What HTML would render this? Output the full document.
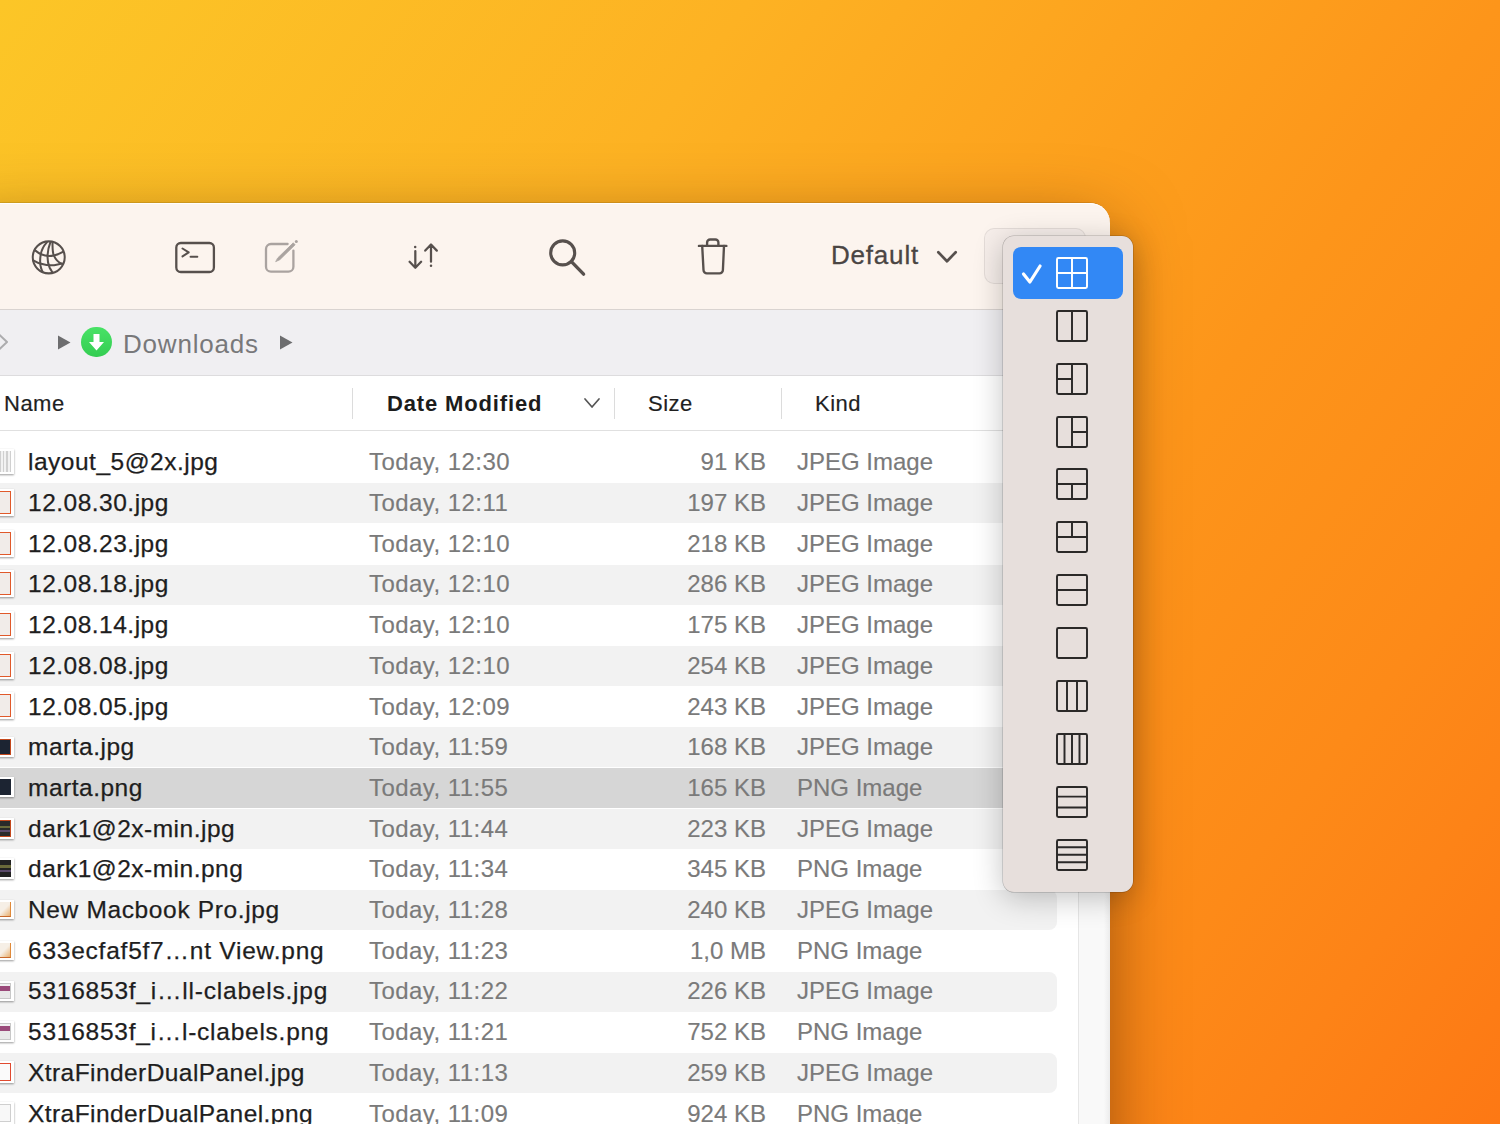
<!DOCTYPE html>
<html><head><meta charset="utf-8">
<style>
html,body{margin:0;padding:0;}
body{width:1500px;height:1124px;overflow:hidden;position:relative;
 background:linear-gradient(127deg,#fcc627 0%,#fdb223 32%,#fda01d 52%,#fd951a 64%,#fd8a18 81%,#fd8317 89%,#fd7814 100%);
 font-family:"Liberation Sans",sans-serif;}
.win{position:absolute;left:-40px;top:203px;width:1149px;height:1000px;background:#fff;
 border-top-right-radius:20px;overflow:hidden;box-shadow:0 0 0 1px rgba(0,0,0,0.10),0 24px 70px rgba(60,20,0,0.5);}
.abs{position:absolute;}
.toolbar{position:absolute;left:0;top:203px;width:1110px;height:106px;background:#fcf4ee;border-top-right-radius:20px;box-shadow:inset 0 1px 0 rgba(255,255,255,0.9);}
.tbline{position:absolute;left:0;top:309px;width:1110px;height:1px;background:#d9d3d0;}
.pathbar{position:absolute;left:0;top:310px;width:1110px;height:65px;background:#f0eff2;}
.pbline{position:absolute;left:0;top:375px;width:1110px;height:1px;background:#dddcde;}
.header{position:absolute;left:0;top:376px;width:1110px;height:54px;background:#fff;}
.hline{position:absolute;left:0;top:430px;width:1110px;height:1px;background:#e0e0e0;}
.sep{position:absolute;top:388px;width:1px;height:31px;background:#dcdcdc;}
.h{position:absolute;top:376.8px;height:54px;line-height:54px;font-size:22px;color:#1f1f1f;white-space:nowrap;letter-spacing:0.5px;-webkit-text-stroke:0.2px #1f1f1f;}
.row{position:absolute;left:-20px;width:1077px;height:40px;border-radius:8px;}
.row.alt{background:#f2f2f2;}
.row.sel{background:#d6d6d6;}
.t{position:absolute;height:40.7px;line-height:40.7px;font-size:24px;white-space:nowrap;}
.name{left:28px;color:#1e1e1e;letter-spacing:0.5px;font-size:24.5px;-webkit-text-stroke:0.25px #1e1e1e;}
.date{left:369px;color:#7a7a7a;letter-spacing:0.45px;-webkit-text-stroke:0.15px #7a7a7a;}
.size{right:734px;color:#7a7a7a;text-align:right;-webkit-text-stroke:0.15px #7a7a7a;}
.kind{left:797px;color:#7a7a7a;-webkit-text-stroke:0.15px #7a7a7a;}
.fi{position:absolute;left:-6px;width:19.5px;height:24.5px;background:#fff;box-shadow:0 0.5px 2px rgba(0,0,0,0.4);}
.fi::after{content:"";position:absolute;left:2px;top:2px;right:2.5px;bottom:2px;}
.fi.grid::after{background:repeating-linear-gradient(90deg,#d0d0d0 0 1.5px,#f2f2f2 1.5px 3.5px);}
.fi.orange::after{border:1.6px solid #e0592a;background:#f1ece9;}
.fi.darko::after{border:1.6px solid #c4481c;background:#1c2432;}
.fi.dark::after{background:#1c2432;}
.fi.darko2::after{border:1.6px solid #c4481c;background:linear-gradient(180deg,#2a2a2a 0 30%,#6a6a3a 30% 45%,#2a2a2a 45% 60%,#5a4a6a 60% 70%,#2a2a2a 70%);}
.fi.dark2::after{background:linear-gradient(180deg,#222 0 30%,#6a6a3a 30% 45%,#222 45% 60%,#5a4a6a 60% 70%,#222 70%);}
.fi.mac::after{border-right:1.6px solid #e08a3a;border-bottom:1.6px solid #c8682a;background:linear-gradient(135deg,#f6efe6 0 55%,#e8b070 100%);}
.fi.purple::after{background:linear-gradient(180deg,#f0f0f0 0 15%,#9a4a7a 15% 50%,#e8e8e8 50%);border:1px solid #c8c8c8;}
.fi.redw::after{border:1.6px solid #e04a30;background:#fafafa;}
.fi.white::after{border:1px solid #cfcfcf;background:#f8f8f8;}
.strip{position:absolute;left:1078px;top:431px;width:31px;height:700px;background:linear-gradient(90deg,#f9f9f9 0,#f9f9f9 80%,#ececec 100%);border-left:1px solid #e6e6e6;}
.popup{position:absolute;left:1003px;top:236px;width:130px;height:656px;background:#e7dfdc;border-radius:11px;
 box-shadow:0 0 0 0.5px rgba(0,0,0,0.25),0 6px 30px rgba(0,0,0,0.24);}
.psel{position:absolute;left:1013px;top:246.5px;width:110px;height:52.5px;background:#3288f5;border-radius:8px;}
.lay{position:absolute;left:1056px;}
.btn{position:absolute;left:985px;top:228.5px;width:100px;height:54.5px;border-radius:9px;background:#f6eeea;box-shadow:0 0 0 1px #e4dcd8;}
svg{overflow:visible;}
</style></head>
<body>
<div class="win"></div>
<div class="toolbar"></div>
<div class="tbline"></div>
<div class="pathbar"></div>
<div class="pbline"></div>
<div class="header"></div>
<div class="hline"></div>

<!-- toolbar icons -->
<svg class="abs" style="left:28px;top:236px" width="42" height="42" viewBox="0 0 1124 1124" fill="none" stroke="#57504d" stroke-width="54" stroke-linecap="round">
 <circle cx="555" cy="572" r="428"/>
 <path d="M505,170 C420,260 360,380 340,500 C320,620 320,760 350,860 C365,910 380,940 395,965"/>
 <path d="M600,165 C560,270 530,380 525,500 C515,640 540,760 580,850 C610,910 640,950 650,965"/>
 <path d="M655,175 C660,300 650,420 690,520 C740,630 800,700 890,740"/>
 <path d="M190,385 C260,440 300,470 350,490 C450,530 570,545 690,520 C780,500 860,470 935,425"/>
 <path d="M140,650 C220,700 300,730 380,750 C480,780 600,790 700,780 C790,770 860,750 915,735"/>
</svg>
<svg class="abs" style="left:174px;top:241px" width="42" height="33" viewBox="0 0 42 33" fill="none" stroke="#57504d" stroke-width="2.3" stroke-linecap="round" stroke-linejoin="round">
 <rect x="2.3" y="2" width="37.6" height="29" rx="4.5"/>
 <path d="M8.5 7.5L14.7 11.4L8.5 15.4" stroke-width="2"/>
 <path d="M16.6 15.8H23.3" stroke-width="2.1"/>
</svg>
<svg class="abs" style="left:263px;top:239px" width="38" height="36" viewBox="0 0 38 36" fill="none" stroke="#aaa3a0" stroke-width="2.3" stroke-linecap="round" stroke-linejoin="round">
 <path d="M24.6 5H8A5 5 0 0 0 3 10V27.7A5 5 0 0 0 8 32.7H25.4A5 5 0 0 0 30.4 27.7V11.6"/>
 <path d="M13 22.5L16.81 20.68L32.14 5.77L30.26 3.83L14.93 18.74Z" fill="#aaa3a0" stroke-width="0.8"/>
 <circle cx="33.3" cy="2.4" r="1.5" fill="#aaa3a0" stroke="none"/>
</svg>
<svg class="abs" style="left:406px;top:241px" width="34" height="30" viewBox="0 0 34 30" fill="none" stroke="#57504d" stroke-width="2.25" stroke-linecap="round" stroke-linejoin="round">
 <path d="M9.32 10V26.6M3.6 20.8L9.32 26.7L15.1 20.8"/>
 <circle cx="9.2" cy="5.9" r="1.25" fill="#57504d" stroke="none"/>
 <path d="M25 20.7V3.6M19.25 9.6L25 3.5L30.8 9.6"/>
 <circle cx="25" cy="24.7" r="1.25" fill="#57504d" stroke="none"/>
</svg>
<svg class="abs" style="left:546px;top:236px" width="42" height="42" viewBox="0 0 42 42" fill="none" stroke="#57504d" stroke-width="3.1" stroke-linecap="round">
 <circle cx="16.7" cy="16.9" r="12"/>
 <path d="M25.4 25.6L37.6 38.1" stroke-width="3.4"/>
</svg>
<svg class="abs" style="left:695px;top:236px" width="36" height="40" viewBox="0 0 36 40" fill="none" stroke="#57504d" stroke-width="2.35" stroke-linecap="round" stroke-linejoin="round">
 <path d="M3.9 9.9H31.4"/>
 <path d="M12.1 9.9V6.5A3 3 0 0 1 15.1 3.5H20.4A3 3 0 0 1 23.4 6.5V9.9"/>
 <path d="M7.2 9.9L8.5 34.0A3.4 3.4 0 0 0 11.9 37.4H24.5A3.4 3.4 0 0 0 27.9 34.0L29 9.9"/>
</svg>
<div class="abs" style="left:831px;top:236px;height:38px;line-height:38px;font-size:26px;color:#4a4543;letter-spacing:0.8px;-webkit-text-stroke:0.3px #4a4543;">Default</div>
<svg class="abs" style="left:936px;top:248px" width="24" height="16" viewBox="0 0 24 16" fill="none" stroke="#57504d" stroke-width="2.7" stroke-linecap="round" stroke-linejoin="round">
 <path d="M2.3 4.2L11 13.3L19.7 4.2"/>
</svg>
<div class="btn"></div>

<!-- path bar -->
<svg class="abs" style="left:-6px;top:333px" width="16" height="18" viewBox="0 0 16 18" fill="none" stroke="#acacae" stroke-width="2" stroke-linejoin="round"><path d="M5 1.5L13 9L5 16.5"/></svg>
<svg class="abs" style="left:57px;top:335px" width="14" height="15" viewBox="0 0 14 15"><path d="M1 0.5L13.5 7.5L1 14.5Z" fill="#6d6d6f"/></svg>
<div class="abs" style="left:81.3px;top:326.8px;width:30.4px;height:30.4px;border-radius:50%;background:linear-gradient(180deg,#48e266,#34cd52);"></div>
<svg class="abs" style="left:81px;top:326.5px" width="31" height="31" viewBox="0 0 31 31"><path d="M12.5 7H18.5V15H23L15.5 23.5L8 15H12.5Z" fill="#fff"/></svg>
<div class="abs" style="left:123px;top:323px;height:42px;line-height:42px;font-size:26px;color:#78787a;letter-spacing:0.8px;">Downloads</div>
<svg class="abs" style="left:279px;top:335px" width="14" height="15" viewBox="0 0 14 15"><path d="M1 0.5L13.5 7.5L1 14.5Z" fill="#6d6d6f"/></svg>

<!-- header -->
<div class="h" style="left:4px;">Name</div>
<div class="sep" style="left:352px"></div>
<div class="h" style="left:387px;font-weight:bold;letter-spacing:0.85px;-webkit-text-stroke:0;color:#1c1c1c;">Date Modified</div>
<svg class="abs" style="left:583px;top:397px" width="18" height="12" viewBox="0 0 18 12" fill="none" stroke="#555" stroke-width="1.8" stroke-linecap="round" stroke-linejoin="round"><path d="M2 2L9 10L16 2" stroke-width="1.7"/></svg>
<div class="sep" style="left:614px"></div>
<div class="h" style="left:648px;">Size</div>
<div class="sep" style="left:781px"></div>
<div class="h" style="left:815px;">Kind</div>

<div class="strip"></div>
<!-- rows -->
<div class="row" style="top:442.4px"></div>
<div class="fi grid" style="top:449.4px;height:24.5px"></div>
<div class="t name" style="top:442.3px">layout_5@2x.jpg</div>
<div class="t date" style="top:442.3px">Today, 12:30</div>
<div class="t size" style="top:442.3px">91 KB</div>
<div class="t kind" style="top:442.3px">JPEG Image</div>
<div class="row alt" style="top:483.1px"></div>
<div class="fi orange" style="top:488.9px;height:27px"></div>
<div class="t name" style="top:483.0px">12.08.30.jpg</div>
<div class="t date" style="top:483.0px">Today, 12:11</div>
<div class="t size" style="top:483.0px">197 KB</div>
<div class="t kind" style="top:483.0px">JPEG Image</div>
<div class="row" style="top:523.8px"></div>
<div class="fi orange" style="top:529.6px;height:27px"></div>
<div class="t name" style="top:523.7px">12.08.23.jpg</div>
<div class="t date" style="top:523.7px">Today, 12:10</div>
<div class="t size" style="top:523.7px">218 KB</div>
<div class="t kind" style="top:523.7px">JPEG Image</div>
<div class="row alt" style="top:564.5px"></div>
<div class="fi orange" style="top:570.2px;height:27px"></div>
<div class="t name" style="top:564.4px">12.08.18.jpg</div>
<div class="t date" style="top:564.4px">Today, 12:10</div>
<div class="t size" style="top:564.4px">286 KB</div>
<div class="t kind" style="top:564.4px">JPEG Image</div>
<div class="row" style="top:605.2px"></div>
<div class="fi orange" style="top:611.0px;height:27px"></div>
<div class="t name" style="top:605.1px">12.08.14.jpg</div>
<div class="t date" style="top:605.1px">Today, 12:10</div>
<div class="t size" style="top:605.1px">175 KB</div>
<div class="t kind" style="top:605.1px">JPEG Image</div>
<div class="row alt" style="top:645.9px"></div>
<div class="fi orange" style="top:651.6px;height:27px"></div>
<div class="t name" style="top:645.8px">12.08.08.jpg</div>
<div class="t date" style="top:645.8px">Today, 12:10</div>
<div class="t size" style="top:645.8px">254 KB</div>
<div class="t kind" style="top:645.8px">JPEG Image</div>
<div class="row" style="top:686.6px"></div>
<div class="fi orange" style="top:692.4px;height:27px"></div>
<div class="t name" style="top:686.5px">12.08.05.jpg</div>
<div class="t date" style="top:686.5px">Today, 12:09</div>
<div class="t size" style="top:686.5px">243 KB</div>
<div class="t kind" style="top:686.5px">JPEG Image</div>
<div class="row alt" style="top:727.3px"></div>
<div class="fi darko" style="top:736.6px;height:20px"></div>
<div class="t name" style="top:727.2px">marta.jpg</div>
<div class="t date" style="top:727.2px">Today, 11:59</div>
<div class="t size" style="top:727.2px">168 KB</div>
<div class="t kind" style="top:727.2px">JPEG Image</div>
<div class="row sel" style="top:768.0px"></div>
<div class="fi dark" style="top:777.3px;height:20px"></div>
<div class="t name" style="top:767.9px">marta.png</div>
<div class="t date" style="top:767.9px">Today, 11:55</div>
<div class="t size" style="top:767.9px">165 KB</div>
<div class="t kind" style="top:767.9px">PNG Image</div>
<div class="row alt" style="top:808.7px"></div>
<div class="fi darko2" style="top:817.5px;height:21px"></div>
<div class="t name" style="top:808.6px">dark1@2x-min.jpg</div>
<div class="t date" style="top:808.6px">Today, 11:44</div>
<div class="t size" style="top:808.6px">223 KB</div>
<div class="t kind" style="top:808.6px">JPEG Image</div>
<div class="row" style="top:849.4px"></div>
<div class="fi dark2" style="top:858.1px;height:21px"></div>
<div class="t name" style="top:849.3px">dark1@2x-min.png</div>
<div class="t date" style="top:849.3px">Today, 11:34</div>
<div class="t size" style="top:849.3px">345 KB</div>
<div class="t kind" style="top:849.3px">PNG Image</div>
<div class="row alt" style="top:890.1px"></div>
<div class="fi mac" style="top:899.9px;height:19px"></div>
<div class="t name" style="top:890.0px;letter-spacing:0.64px">New Macbook Pro.jpg</div>
<div class="t date" style="top:890.0px">Today, 11:28</div>
<div class="t size" style="top:890.0px">240 KB</div>
<div class="t kind" style="top:890.0px">JPEG Image</div>
<div class="row" style="top:930.8px"></div>
<div class="fi mac" style="top:940.6px;height:19px"></div>
<div class="t name" style="top:930.7px;letter-spacing:0.77px">633ecfaf5f7…nt View.png</div>
<div class="t date" style="top:930.7px">Today, 11:23</div>
<div class="t size" style="top:930.7px">1,0 MB</div>
<div class="t kind" style="top:930.7px">PNG Image</div>
<div class="row alt" style="top:971.5px"></div>
<div class="fi purple" style="top:980.5px;height:20.5px"></div>
<div class="t name" style="top:971.4px;letter-spacing:0.78px">5316853f_i…ll-clabels.jpg</div>
<div class="t date" style="top:971.4px">Today, 11:22</div>
<div class="t size" style="top:971.4px">226 KB</div>
<div class="t kind" style="top:971.4px">JPEG Image</div>
<div class="row" style="top:1012.2px"></div>
<div class="fi purple" style="top:1021.2px;height:20.5px"></div>
<div class="t name" style="top:1012.1px;letter-spacing:0.75px">5316853f_i…l-clabels.png</div>
<div class="t date" style="top:1012.1px">Today, 11:21</div>
<div class="t size" style="top:1012.1px">752 KB</div>
<div class="t kind" style="top:1012.1px">PNG Image</div>
<div class="row alt" style="top:1052.9px"></div>
<div class="fi redw" style="top:1061.1px;height:22px"></div>
<div class="t name" style="top:1052.8px;letter-spacing:0.43px">XtraFinderDualPanel.jpg</div>
<div class="t date" style="top:1052.8px">Today, 11:13</div>
<div class="t size" style="top:1052.8px">259 KB</div>
<div class="t kind" style="top:1052.8px">JPEG Image</div>
<div class="row" style="top:1093.6px"></div>
<div class="fi white" style="top:1101.8px;height:22px"></div>
<div class="t name" style="top:1093.5px;letter-spacing:0.43px">XtraFinderDualPanel.png</div>
<div class="t date" style="top:1093.5px">Today, 11:09</div>
<div class="t size" style="top:1093.5px">924 KB</div>
<div class="t kind" style="top:1093.5px">PNG Image</div>

<!-- popup -->
<div class="popup"></div>
<div class="psel"></div>
<svg class="abs" style="left:1020px;top:262px" width="24" height="24" viewBox="0 0 24 24" fill="none" stroke="#fff" stroke-width="3.2" stroke-linecap="round" stroke-linejoin="round"><path d="M3.5 12L9.9 20L20.1 4"/></svg>
<svg class="lay" style="top:256.6px" width="32" height="32" viewBox="0 0 32 32" fill="none" stroke="#fff" stroke-width="1.95"><rect x="1" y="1" width="30" height="30" rx="1.4"/><path d="M16 1V31M1 16H31"/></svg>
<svg class="lay" style="top:309.6px" width="32" height="32" viewBox="0 0 32 32" fill="none" stroke="#2b2928" stroke-width="1.95"><rect x="1" y="1" width="30" height="30" rx="1.4"/><path d="M16 1V31"/></svg>
<svg class="lay" style="top:362.5px" width="32" height="32" viewBox="0 0 32 32" fill="none" stroke="#2b2928" stroke-width="1.95"><rect x="1" y="1" width="30" height="30" rx="1.4"/><path d="M16 1V31M1 16H16"/></svg>
<svg class="lay" style="top:415.5px" width="32" height="32" viewBox="0 0 32 32" fill="none" stroke="#2b2928" stroke-width="1.95"><rect x="1" y="1" width="30" height="30" rx="1.4"/><path d="M16 1V31M16 16H31"/></svg>
<svg class="lay" style="top:468.4px" width="32" height="32" viewBox="0 0 32 32" fill="none" stroke="#2b2928" stroke-width="1.95"><rect x="1" y="1" width="30" height="30" rx="1.4"/><path d="M1 16H31M16 16V31"/></svg>
<svg class="lay" style="top:521.4px" width="32" height="32" viewBox="0 0 32 32" fill="none" stroke="#2b2928" stroke-width="1.95"><rect x="1" y="1" width="30" height="30" rx="1.4"/><path d="M1 16H31M16 1V16"/></svg>
<svg class="lay" style="top:574.4px" width="32" height="32" viewBox="0 0 32 32" fill="none" stroke="#2b2928" stroke-width="1.95"><rect x="1" y="1" width="30" height="30" rx="1.4"/><path d="M1 16H31"/></svg>
<svg class="lay" style="top:627.3px" width="32" height="32" viewBox="0 0 32 32" fill="none" stroke="#2b2928" stroke-width="1.95"><rect x="1" y="1" width="30" height="30" rx="1.4"/></svg>
<svg class="lay" style="top:680.2px" width="32" height="32" viewBox="0 0 32 32" fill="none" stroke="#2b2928" stroke-width="1.95"><rect x="1" y="1" width="30" height="30" rx="1.4"/><path d="M11 1V31M21 1V31"/></svg>
<svg class="lay" style="top:733.2px" width="32" height="32" viewBox="0 0 32 32" fill="none" stroke="#2b2928" stroke-width="1.95"><rect x="1" y="1" width="30" height="30" rx="1.4"/><path d="M8.5 1V31M16 1V31M23.5 1V31"/></svg>
<svg class="lay" style="top:786.1px" width="32" height="32" viewBox="0 0 32 32" fill="none" stroke="#2b2928" stroke-width="1.95"><rect x="1" y="1" width="30" height="30" rx="1.4"/><path d="M1 10.6H31M1 21.4H31"/></svg>
<svg class="lay" style="top:839.1px" width="32" height="32" viewBox="0 0 32 32" fill="none" stroke="#2b2928" stroke-width="1.95"><rect x="1" y="1" width="30" height="30" rx="1.4"/><path d="M1 8.2H31M1 15.8H31M1 23.3H31"/></svg>
</body></html>
